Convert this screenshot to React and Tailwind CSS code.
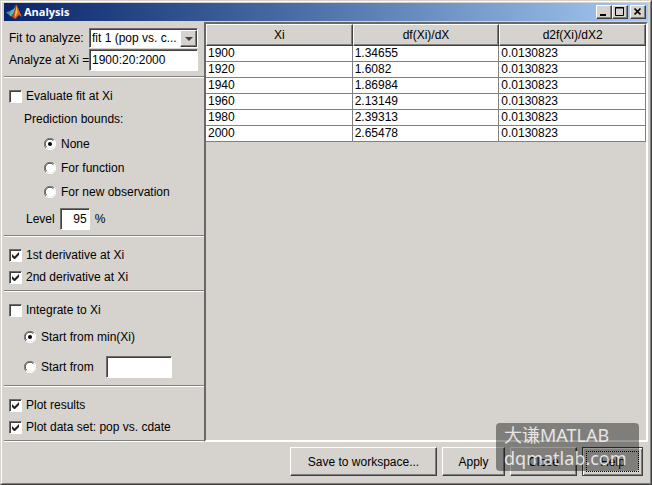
import React, { useState } from 'react';
import { clsx } from 'clsx';

const SUNKEN = 'border border-t-[#6f6d6a] border-l-[#6f6d6a] border-b-white border-r-white';
const RAISED = 'border border-t-white border-l-white border-b-[#404040] border-r-[#404040] shadow-[inset_-1px_-1px_0_#808080]';

const ROWS = [
  ['1900', '1.34655', '0.0130823'],
  ['1920', '1.6082', '0.0130823'],
  ['1940', '1.86984', '0.0130823'],
  ['1960', '2.13149', '0.0130823'],
  ['1980', '2.39313', '0.0130823'],
  ['2000', '2.65478', '0.0130823'],
];

const MatlabLogo = () => (
  <svg width="16" height="16" viewBox="0 0 16 16" aria-hidden="true">
    <path d="M0 8.5 5 6.5 8 9 5 12.5Z" fill="#3f8f9c" />
    <path d="M5 6.5 7.5 5 10 1 8.5 8 5 12.5 3.5 11Z" fill="#5fb3bd" />
    <path d="M5 12.5 7.5 9.5 10 0.5 11 1 11.5 6 9 15Z" fill="#b5371c" />
    <path d="M10.5 0.5 12.5 5 16 13 13 11 9 15 7.5 12.5 9.5 8Z" fill="#e0651f" />
    <path d="M10.5 2 11.5 8 9.5 13 8.8 11Z" fill="#f6c445" />
  </svg>
);

const CaptionButton = ({ label, className, children }) => (
  <button
    type="button"
    aria-label={label}
    className={clsx('flex h-[14px] w-4 items-center justify-center bg-[#d6d3ce]', RAISED, className)}
  >
    <svg width="14" height="12" viewBox="0 0 14 12" fill="none" stroke="#000" aria-hidden="true">
      {children}
    </svg>
  </button>
);

const Check = ({ label, defaultChecked }) => (
  <label className="flex h-5 items-center gap-1">
    <span className="grid shrink-0">
      <input
        type="checkbox"
        defaultChecked={defaultChecked}
        className={clsx(
          'peer col-start-1 row-start-1 size-[13px] appearance-none bg-white shadow-[inset_1px_1px_0_#404040]',
          SUNKEN
        )}
      />
      <svg
        viewBox="0 0 13 13"
        className="pointer-events-none invisible col-start-1 row-start-1 size-[13px] peer-checked:visible"
        aria-hidden="true"
      >
        <path d="M3 5v3l2 2h1l4-4V3L5.500 7.500Z" fill="#222" />
      </svg>
    </span>
    {label}
  </label>
);

const RadioDot = (props) => (
  <span className="grid shrink-0">
    <input type="radio" className="peer col-start-1 row-start-1 size-3 appearance-none rounded-full" {...props} />
    <svg viewBox="0 0 12 12" className="pointer-events-none col-start-1 row-start-1 size-3" aria-hidden="true">
      <circle cx="6" cy="6" r="5" fill="#fff" />
      <path d="M1.900 10.100A5.500 5.500 0 0 1 10.100 1.900" fill="none" stroke="#808080" />
      <path d="M2.600 9.200A4.600 4.600 0 0 1 9.200 2.600" fill="none" stroke="#404040" />
      <path d="M10.100 1.900A5.500 5.500 0 0 1 1.900 10.100" fill="none" stroke="#fff" />
    </svg>
    <span className="invisible col-start-1 row-start-1 size-1 place-self-center rounded-full bg-black peer-checked:visible" />
  </span>
);

const Radio = ({ label, name, checked, onChange }) => (
  <label className="flex h-6 items-center gap-[5px]">
    <RadioDot name={name} checked={checked} onChange={onChange} />
    {label}
  </label>
);

const Field = ({ className, ...props }) => (
  <input
    type="text"
    className={clsx('h-[22px] min-w-0 bg-white px-0.5 shadow-[inset_1px_1px_0_#404040] outline-none', SUNKEN, className)}
    {...props}
  />
);

const Section = ({ className, children }) => (
  <section className={clsx('border-b border-white shadow-[inset_0_-1px_0_#808080]', className)}>{children}</section>
);

const PushButton = ({ className, children }) => (
  <button type="button" className={clsx('h-[29px] bg-[#d6d3ce]', className)}>
    {children}
  </button>
);

const App = () => {
  const [bounds, setBounds] = useState('None');
  const [start, setStart] = useState('min');

  return (
    <div className="relative flex min-h-screen flex-col border border-t-[#d6d3ce] border-l-[#d6d3ce] border-r-[#404040] border-b-[#404040] bg-[#d6d3ce] font-['Liberation_Sans',Arial,sans-serif] text-[12px] leading-4 text-black">
      <div className="flex flex-1 flex-col border border-t-white border-l-white border-r-[#808080] border-b-[#808080] px-0.5 pt-px pb-0.5">
        {/* Title bar */}
        <header className="mb-px flex h-[18px] items-center bg-linear-to-r from-[#0a246a] to-[#a6caf0] pr-0.5 pl-0.5">
          <MatlabLogo />
          <h1 className="ml-0.5 flex-1 font-['Open_Sans',sans-serif] text-[11px] font-bold text-white">Analysis</h1>
          <CaptionButton label="Minimize">
            <path d="M3 9h6" strokeWidth="2" />
          </CaptionButton>
          <CaptionButton label="Maximize">
            <path d="M2.500 1.500h8v8h-8zM2 2h9" />
          </CaptionButton>
          <CaptionButton label="Close window" className="ml-0.5">
            <path d="M3.500 2.500l6 6M9.500 2.500l-6 6" strokeWidth="1.700" />
          </CaptionButton>
        </header>

        <div className="flex flex-1">
          {/* Options */}
          <aside className="flex w-[200px] shrink-0 flex-col">
            <Section className="grid grid-cols-[80px_1fr] items-center gap-y-px pt-1.5 pr-1.5 pb-1.5 pl-[5px] whitespace-nowrap">
              <label htmlFor="fit">Fit to analyze:</label>
              <div className={clsx('flex h-5 bg-white shadow-[inset_1px_1px_0_#404040]', SUNKEN)}>
                <select id="fit" className="min-w-0 flex-1 appearance-none bg-transparent pl-0.5 outline-none">
                  <option>fit 1 (pop vs. c...</option>
                </select>
                <span className={clsx('pointer-events-none mt-px flex w-[17px] items-center justify-center bg-[#d6d3ce]', RAISED)}>
                  <svg width="8" height="4" viewBox="0 0 8 4" aria-hidden="true">
                    <path d="M0 0h8L4 4Z" fill="#404040" />
                  </svg>
                </span>
              </div>
              <label htmlFor="xi">Analyze at Xi =</label>
              <Field id="xi" defaultValue="1900:20:2000" />
            </Section>

            <Section className="pt-2 pb-[5px] pl-[5px]">
              <Check label="Evaluate fit at Xi" />
              <p className="mt-[3px] h-5 pl-[15px] leading-5">Prediction bounds:</p>
              <div className="mt-[3px] pl-[35px]">
                {['None', 'For function', 'For new observation'].map((item) => (
                  <Radio key={item} label={item} name="bounds" checked={bounds === item} onChange={() => setBounds(item)} />
                ))}
              </div>
              <div className="mt-[3px] flex h-6 items-center gap-[5px] pl-[17px]">
                <label htmlFor="level">Level</label>
                <Field id="level" defaultValue="95" className="w-[30px] text-right" />
                <span>%</span>
              </div>
            </Section>

            <Section className="flex flex-col gap-0.5 pt-2 pb-1 pl-[5px]">
              <Check label="1st derivative at Xi" defaultChecked />
              <Check label="2nd derivative at Xi" defaultChecked />
            </Section>

            <Section className="pt-2 pb-[7px] pl-[5px]">
              <Check label="Integrate to Xi" />
              <div className="flex flex-col gap-1.5 pt-[5px] pl-[15px]">
                <Radio label="Start from min(Xi)" name="start" checked={start === 'min'} onChange={() => setStart('min')} />
                <div className="flex items-center gap-3">
                  <Radio label="Start from" name="start" checked={start === 'value'} onChange={() => setStart('value')} />
                  <Field aria-label="Start value" className="w-[66px]" />
                </div>
              </div>
            </Section>

            <Section className="flex flex-1 flex-col gap-0.5 pt-2 pb-1 pl-[5px]">
              <Check label="Plot results" defaultChecked />
              <Check label="Plot data set: pop vs. cdate" defaultChecked />
            </Section>
          </aside>

          {/* Results */}
          <main className="flex-1 border-2 border-t-[#6a6866] border-r-white border-b-white border-l-[#6a6866]">
            <table className="w-full table-fixed border-separate border-spacing-0">
              <thead>
                <tr>
                  {['Xi', 'df(Xi)/dX', 'd2f(Xi)/dX2'].map((title) => (
                    <th key={title} className={clsx('h-[22px] p-0 font-normal', RAISED)}>
                      {title}
                    </th>
                  ))}
                </tr>
              </thead>
              <tbody>
                {ROWS.map((row) => (
                  <tr key={row[0]}>
                    {row.map((value, i) => (
                      <td key={i} className="h-4 border-r border-b border-[#808080] bg-white p-0 pl-0.5 leading-[15px]">
                        {value}
                      </td>
                    ))}
                  </tr>
                ))}
              </tbody>
            </table>
          </main>
        </div>

        {/* Actions */}
        <footer className="flex justify-end gap-[5px] pt-[5px] pr-[5px] pb-[5px]">
          <PushButton className={clsx('w-[147px]', RAISED)}>Save to workspace...</PushButton>
          <PushButton className={clsx('w-[63px]', RAISED)}>Apply</PushButton>
          <PushButton className={clsx('w-[67px]', RAISED)}>Close</PushButton>
          <PushButton className="w-[61px] border border-[#404040] p-px shadow-[inset_1px_1px_0_#fff,inset_-1px_-1px_0_#808080]">
            <span className="m-0.5 flex h-[21px] items-center justify-center border border-dotted border-black">Help</span>
          </PushButton>
        </footer>
      </div>

      <div className="pointer-events-none absolute right-3 bottom-[13px] h-12 w-[143px] rounded-sm bg-black/40 pt-px pl-2 font-['Noto_Sans','Noto_Sans_CJK_SC',sans-serif] text-[18px] leading-[23px] whitespace-nowrap text-white/80">
        <p>大谦MATLAB</p>
        <p>dqmatlab.com</p>
      </div>
    </div>
  );
};

export default App;
